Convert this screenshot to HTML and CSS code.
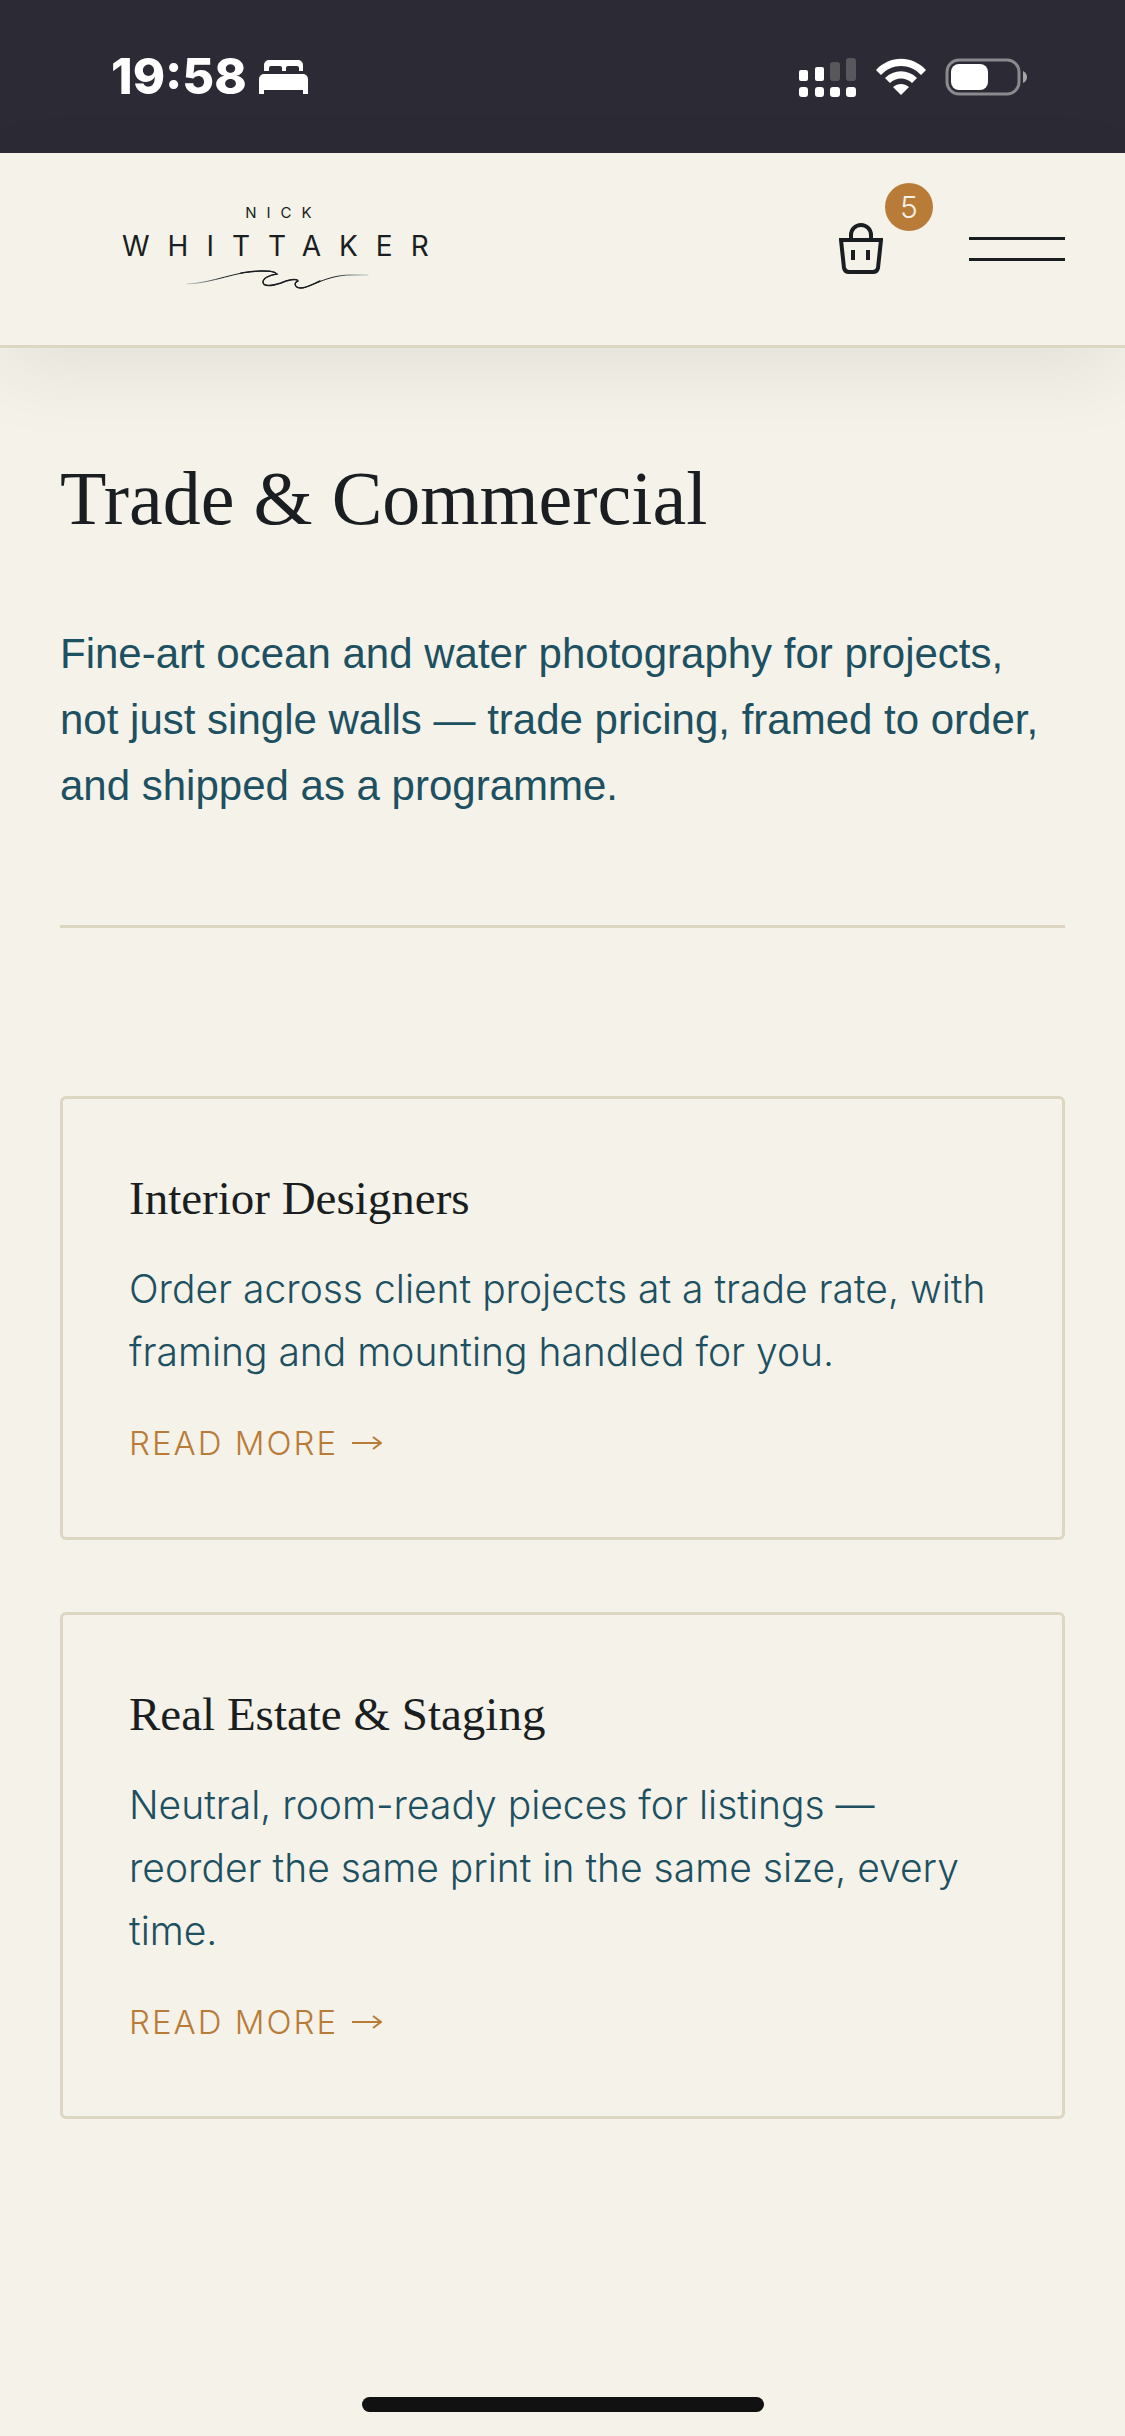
FILE: index.html
```html
<!DOCTYPE html>
<html lang="en">
<head>
  <meta charset="UTF-8" />
  <meta name="viewport" content="width=device-width, initial-scale=1.0" />
  <title>Trade &amp; Commercial | Nick Whittaker</title>
  <link rel="stylesheet" href="styles.css">
</head>
<body>
  <div class="status-bar">
    <div class="status-left">
      <span class="clock">19:58</span>
      <svg class="bed-icon" width="50" height="36" viewBox="0 0 50 36" fill="#fff">
        <path d="M5 12V6a5 5 0 0 1 5-5h29a5 5 0 0 1 5 5v6h-4V9a2 2 0 0 0-2-2h-9a2 2 0 0 0-2 2v3h-4V9a2 2 0 0 0-2-2h-9a2 2 0 0 0-2 2v3z" />
        <path d="M0 35V20a5 5 0 0 1 5-5h39a5 5 0 0 1 5 5v15h-5v-4H5v4z" />
      </svg>
    </div>
    <div class="status-right">
      <svg width="58" height="40" viewBox="0 0 58 40" fill="#fff">
        <rect x="0" y="13" width="9" height="11" rx="2" />
        <rect x="16" y="10" width="9" height="14" rx="2" />
        <rect x="31" y="5" width="10" height="19" rx="3" fill="#58575c" />
        <rect x="47" y="1" width="10" height="23" rx="3" fill="#58575c" />
        <rect x="0" y="30" width="9" height="10" rx="3" />
        <rect x="16" y="30" width="9" height="10" rx="3" />
        <rect x="31" y="30" width="10" height="10" rx="3" />
        <rect x="47" y="30" width="10" height="10" rx="3" />
      </svg>
      <svg width="50" height="38" viewBox="0 0 50 38" fill="#fff">
        <path d="M0 12C14-3 36-3 50 12l-5 5C34 5 16 5 5 17z" />
        <path d="M9 20c9-9 23-9 32 0l-5 5c-6-6-16-6-22 0z" />
        <path d="M17 29c5-4 11-4 16 0l-8 8z" />
      </svg>
      <svg width="83" height="38" viewBox="0 0 83 38">
        <rect x="2" y="2" width="72" height="34" rx="12" fill="none" stroke="#8a898d" stroke-width="3" />
        <rect x="6" y="6" width="37" height="26" rx="8" fill="#fff" />
        <path d="M78 13q4 2 4 6t-4 6z" fill="#a5a4a7" />
      </svg>
    </div>
  </div>

  <header class="header">
    <a class="logo" href="#" aria-label="Nick Whittaker">
      <span class="logo-first">NICK</span>
      <span class="logo-last">WHITTAKER</span>
      <svg class="logo-wave" width="184" height="20" viewBox="0 0 184 20" fill="none" stroke="#1a1e20" stroke-linecap="round">
        <defs>
          <linearGradient id="wave" gradientUnits="userSpaceOnUse" x1="0" y1="0" x2="184" y2="0">
            <stop offset="0" stop-color="#1d5060" stop-opacity=".2" />
            <stop offset=".2" stop-color="#1a1e20" />
            <stop offset=".8" stop-color="#1a1e20" />
            <stop offset="1" stop-color="#1d5060" stop-opacity=".2" />
          </linearGradient>
        </defs>
        <path stroke="url(#wave)" d="M1 15C28 14 50 2 75 2c8 0 13 0 16 3-7 1-14 4-14 8 0 5 9 4 18 1 6-3 16-5 17-2-5 2-3 7 3 7 9 0 25-13 50-13h17" />
        <path stroke-width="1.4" d="M55 4C62 3 68 2 75 2c8 0 13 0 16 3-7 1-14 4-14 8 0 5 9 4 18 1 6-3 16-5 17-2-5 2-3 7 3 7 5 0 12-4 19-7" />
      </svg>
    </a>
    <div class="header-actions">
      <a class="cart" href="#" aria-label="Cart, 5 items">
        <svg width="44" height="52" viewBox="0 0 44 52" fill="none" stroke="#1a1e20" stroke-width="4">
          <path d="M2 17h40l-3 28q-1 4-5 4H10q-4 0-5-4z" />
          <path d="M12 17v-5a10 10 0 0 1 20 0v5" />
          <path d="M14 27v10M29 27v10" />
        </svg>
        <span class="cart-count">5</span>
      </a>
      <button class="menu-btn" type="button" aria-label="Menu"></button>
    </div>
  </header>

  <main class="main">
    <section class="intro">
      <h1>Trade &amp; Commercial</h1>
      <p>Fine-art ocean and water photography for projects, not just single walls — trade pricing, framed to order, and shipped as a programme.</p>
    </section>

    <section class="cards">
      <article class="card">
        <h2>Interior Designers</h2>
        <p>Order across client projects at a trade rate, with framing and mounting handled for you.</p>
        <a class="read-more" href="#">Read more
          <svg width="30" height="14" viewBox="0 0 30 14" fill="none" stroke="currentColor" stroke-width="2"><path d="M0 7h29M21 1l8 6-8 6" /></svg>
        </a>
      </article>
      <article class="card">
        <h2>Real Estate &amp; Staging</h2>
        <p>Neutral, room-ready pieces for listings — reorder the same print in the same size, every time.</p>
        <a class="read-more" href="#">Read more
          <svg width="30" height="14" viewBox="0 0 30 14" fill="none" stroke="currentColor" stroke-width="2"><path d="M0 7h29M21 1l8 6-8 6" /></svg>
        </a>
      </article>
    </section>
  </main>

  <div class="home-bar"></div>
</body>
</html>
```

FILE: styles.css
```css
* {
  box-sizing: border-box;
}
body {
  margin: 0;
  min-height: 100vh;
  display: flex;
  flex-direction: column;
  background: #f5f2e9;
  color: #1a1e20;
  font-family: "Liberation Sans", Arial, sans-serif;
}
h1, h2, p {
  margin: 0;
}
a {
  color: inherit;
  text-decoration: none;
}
svg {
  display: block;
}

/* Status bar */
.status-bar {
  display: flex;
  justify-content: space-between;
  align-items: center;
  height: 153px;
  padding: 0 97px 0 111px;
  background: #2c2a34;
}
.status-left,
.status-right {
  display: flex;
  align-items: center;
}
.status-left {
  gap: 12px;
}
.status-right {
  gap: 19px;
}
.clock {
  color: #fff;
  font-family: Inter, sans-serif;
  font-size: 49px;
  font-weight: 800;
}

/* Header */
.header {
  display: flex;
  justify-content: space-between;
  align-items: center;
  height: 195px;
  padding: 0 60px 0 122px;
  border-bottom: 3px solid #dcd6c3;
  box-shadow: 0 24px 80px rgba(0, 0, 0, 0.07);
}
.logo {
  display: flex;
  flex-direction: column;
  align-items: center;
  padding-bottom: 6px;
  font-family: Inter, sans-serif;
}
.logo-first {
  margin-right: -10px;
  font-size: 15px;
  line-height: 20px;
  letter-spacing: 10px;
}
.logo-last {
  margin-right: -12px;
  font-size: 28px;
  line-height: 46px;
  letter-spacing: 18px;
}
.header-actions {
  display: flex;
  align-items: center;
  gap: 86px;
}
.cart {
  position: relative;
}
.cart-count {
  position: absolute;
  left: 46px;
  bottom: 44px;
  width: 48px;
  height: 48px;
  border-radius: 50%;
  background: #b87c38;
  color: #f5f2e9;
  font: 300 30px/48px Inter, sans-serif;
  text-align: center;
}
.menu-btn {
  width: 96px;
  height: 24px;
  padding: 0;
  border: solid #1a1e20;
  border-width: 3px 0;
  background: none;
}

/* Content */
.main {
  flex: 1;
  padding: 108px 60px 0;
}
.intro {
  padding-bottom: 106px;
  border-bottom: 3px solid #dcd6c3;
}
h1 {
  margin-bottom: 81px;
  font: 400 76px/84px "Liberation Serif", "Times New Roman", serif;
}
.intro p {
  color: #1d5060;
  font-size: 42px;
  line-height: 66px;
}
.cards {
  display: grid;
  gap: 72px;
  padding-top: 168px;
}
.card {
  padding: 66px;
  border: 3px solid #dcd6c3;
  border-radius: 6px;
}
.card h2 {
  margin-bottom: 26px;
  font: 400 47px/66px "Liberation Serif", "Times New Roman", serif;
}
.card p {
  margin-bottom: 32px;
  color: #1d5060;
  font: 300 39px/63px Inter, sans-serif;
}
.read-more {
  display: flex;
  align-items: center;
  gap: 14px;
  color: #b87c38;
  font: 300 33px/56px Inter, sans-serif;
  letter-spacing: 2px;
  text-transform: uppercase;
}
.home-bar {
  width: 402px;
  height: 15px;
  margin: 0 auto 24px;
  border-radius: 8px;
  background: #111;
}
```
